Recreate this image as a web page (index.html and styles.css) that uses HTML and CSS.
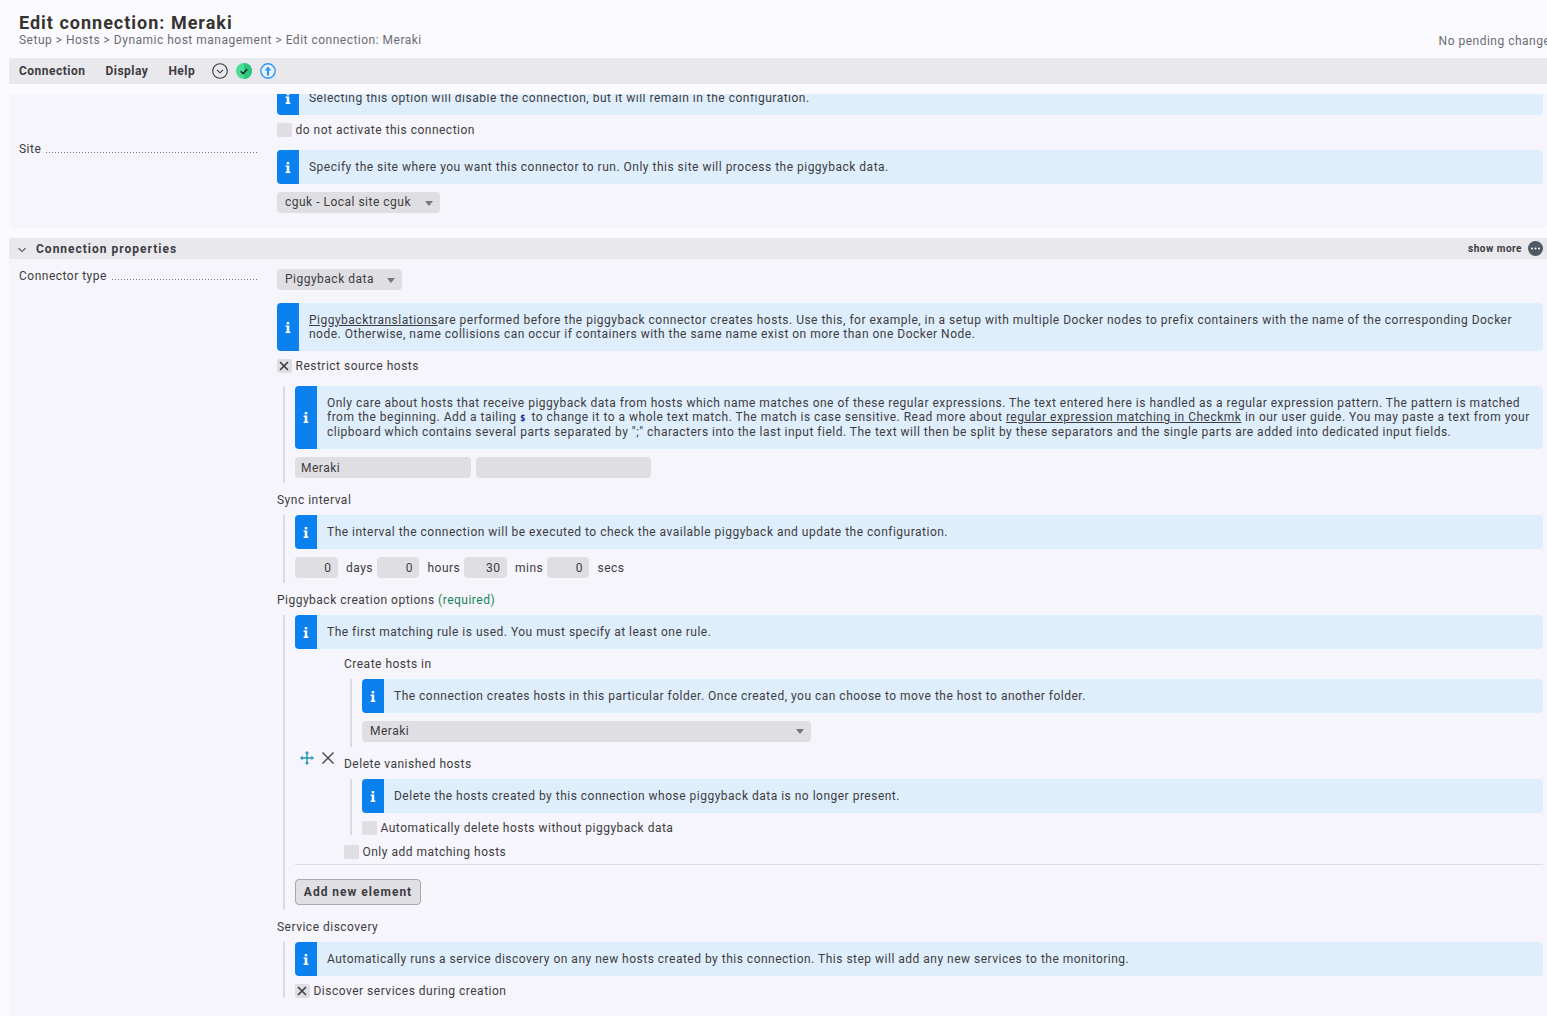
FILE: index.html
```html
<!DOCTYPE html>
<html lang="en">
<head>
    <meta charset="UTF-8">
    <meta name="viewport" content="width=device-width, initial-scale=1.0">
    <link rel="stylesheet" href="styles.css">
    <title>Edit connection: Meraki</title>
</head>
<body>
    <svg class="defs" width="0" height="0">
      <symbol id="info" viewBox="0 0 8 14">
        <rect x="2.400" y="0" width="3.200" height="3" fill="#fff"/>
        <path d="M1 4.600h4.600v7.600H7V14H1v-1.800h1.400V6.400H1z" fill="#fff"/>
      </symbol>
      <symbol id="cross" viewBox="0 0 14 14">
        <path d="M3 3l8 8M11 3l-8 8" stroke="#3a3a40" stroke-width="1.600" fill="none"/>
      </symbol>
    </svg>

    <div class="page-top">
      <div class="titlebar">
        <div>
          <h1>Edit connection: Meraki</h1>
          <div class="breadcrumb">Setup &gt; Hosts &gt; Dynamic host management &gt; Edit connection: Meraki</div>
        </div>
        <div class="pending">No pending changes</div>
      </div>
      <div class="menubar">
        <span class="menu-item">Connection</span>
        <span class="menu-item">Display</span>
        <span class="menu-item">Help</span>
        <svg class="menu-icon first" viewBox="0 0 16 16">
          <circle cx="8" cy="8" r="7.300" fill="none" stroke="#3a3a40" stroke-width="1.100"/>
          <path d="M5 6.800l3 3 3-3" fill="none" stroke="#3a3a40" stroke-width="1.100"/>
        </svg>
        <svg class="menu-icon" viewBox="0 0 16 16">
          <circle cx="8" cy="8" r="8" fill="#4ddc94"/>
          <path d="M8 0a8 8 0 0 1 0 16z" fill="#2fc47e"/>
          <path d="M4.600 8.300l2.400 2.300 4.300-4.400" fill="none" stroke="#22262c" stroke-width="1.500"/>
        </svg>
        <svg class="menu-icon" viewBox="0 0 16 16">
          <circle cx="8" cy="8" r="7.200" fill="#eaf4fe" stroke="#2f96f3" stroke-width="1.400"/>
          <path d="M8 3.400L11.300 7.400H9.100V12.600H6.900V7.400H4.700z" fill="#2f96f3"/>
        </svg>
      </div>
    </div>

    <div class="content">
      <div class="panel first-panel">
        <div class="form-row">
          <div></div>
          <div>
            <div class="info clipped"><div class="info-icon"><svg><use href="#info"/></svg></div><div class="info-text">Selecting this option will disable the connection, but it will remain in the configuration.</div></div>
            <label class="check"><span class="box"></span>do not activate this connection</label>
          </div>
        </div>
        <div class="form-row">
          <div class="form-label"><span>Site</span><span class="dots"></span></div>
          <div class="field-top">
            <div class="info"><div class="info-icon"><svg><use href="#info"/></svg></div><div class="info-text">Specify the site where you want this connector to run. Only this site will process the piggyback data.</div></div>
            <div class="select site">cguk - Local site cguk<span class="caret"></span></div>
          </div>
        </div>
      </div>

      <div class="section-head">
        <svg class="chevron" viewBox="0 0 10 6"><path d="M1.500 1.200L5 4.600l3.500-3.400" fill="none" stroke="#4a4a52" stroke-width="1.100"/></svg>
        <span class="section-title">Connection properties</span>
        <span class="show-more">show more</span>
        <svg class="more-icon" viewBox="0 0 15 15">
          <circle cx="7.500" cy="7.500" r="7.500" fill="#4f5863"/>
          <circle cx="4" cy="7.500" r="1" fill="#fff"/><circle cx="7.500" cy="7.500" r="1" fill="#fff"/><circle cx="11" cy="7.500" r="1" fill="#fff"/>
        </svg>
      </div>

      <div class="panel">
        <div class="form-row">
          <div class="form-label"><span>Connector type</span><span class="dots"></span></div>
          <div>
            <div class="select">Piggyback data<span class="caret"></span></div>

            <div class="info spaced"><div class="info-icon"><svg><use href="#info"/></svg></div><div class="info-text"><u>Piggybacktranslations</u>are performed before the piggyback connector creates hosts. Use this, for example, in a setup with multiple Docker nodes to prefix containers with the name of the corresponding Docker node. Otherwise, name collisions can occur if containers with the same name exist on more than one Docker Node.</div></div>
            <label class="check"><span class="box"><svg class="tick"><use href="#cross"/></svg></span>Restrict source hosts</label>

            <div class="nested">
              <div class="info"><div class="info-icon"><svg><use href="#info"/></svg></div><div class="info-text">Only care about hosts that receive piggyback data from hosts which name matches one of these regular expressions. The text entered here is handled as a regular expression pattern. The pattern is matched from the beginning. Add a tailing <tt>$</tt> to change it to a whole text match. The match is case sensitive. Read more about <u>regular expression matching in Checkmk</u> in our user guide. You may paste a text from your clipboard which contains several parts separated by ";" characters into the last input field. The text will then be split by these separators and the single parts are added into dedicated input fields.</div></div>
              <div class="input-row">
                <span class="input wide">Meraki</span>
                <span class="input wide second"></span>
              </div>
            </div>

            <div class="sub-label">Sync interval</div>
            <div class="nested">
              <div class="info"><div class="info-icon"><svg><use href="#info"/></svg></div><div class="info-text">The interval the connection will be executed to check the available piggyback and update the configuration.</div></div>
              <div class="input-row age">
                <span class="input num">0</span><span class="unit days">days</span>
                <span class="input num">0</span><span class="unit hours">hours</span>
                <span class="input num">30</span><span class="unit mins">mins</span>
                <span class="input num">0</span><span class="unit">secs</span>
              </div>
            </div>

            <div class="sub-label">Piggyback creation options <span class="required">(required)</span></div>
            <div class="nested pad-bottom">
              <div class="info"><div class="info-icon"><svg><use href="#info"/></svg></div><div class="info-text">The first matching rule is used. You must specify at least one rule.</div></div>
              <div class="list-entry">
                <div class="entry-tools">
                  <svg class="move-icon" viewBox="0 0 14 14">
                    <path d="M7 1.500v11M1.500 7h11" stroke="#2393b4" stroke-width="1.400"/>
                    <path d="M7 0l2.200 2.600H4.800zM7 14l2.200-2.600H4.800zM0 7l2.600-2.200v4.400zM14 7l-2.600-2.200v4.400z" fill="#2393b4"/>
                  </svg>
                  <svg class="delete-icon" viewBox="0 0 14 14"><path d="M1.500 1.500l11 11M12.500 1.500l-11 11" stroke="#4a4f57" stroke-width="1.500"/></svg>
                </div>
                <div class="entry-body">
                  <div class="entry-label">Create hosts in</div>
                  <div class="nested inner pad-bottom">
                    <div class="info"><div class="info-icon"><svg><use href="#info"/></svg></div><div class="info-text">The connection creates hosts in this particular folder. Once created, you can choose to move the host to another folder.</div></div>
                    <div class="select folder">Meraki<span class="caret"></span></div>
                  </div>
                  <div class="entry-label next">Delete vanished hosts</div>
                  <div class="nested inner">
                    <div class="info"><div class="info-icon"><svg><use href="#info"/></svg></div><div class="info-text">Delete the hosts created by this connection whose piggyback data is no longer present.</div></div>
                    <label class="check"><span class="box"></span>Automatically delete hosts without piggyback data</label>
                  </div>
                  <label class="check only-add"><span class="box"></span>Only add matching hosts</label>
                </div>
              </div>
              <hr class="divider">
              <button class="add-btn">Add new element</button>
            </div>

            <div class="sub-label">Service discovery</div>
            <div class="nested">
              <div class="info"><div class="info-icon"><svg><use href="#info"/></svg></div><div class="info-text">Automatically runs a service discovery on any new hosts created by this connection. This step will add any new services to the monitoring.</div></div>
              <label class="check"><span class="box"><svg class="tick"><use href="#cross"/></svg></span>Discover services during creation</label>
            </div>
          </div>
        </div>
      </div>
    </div>
</body>
</html>
```
FILE: styles.css
```css
html, body {
  margin: 0;
  height: 100%;
  overflow: hidden;
}

body {
  background-color: #fbfbff;
  color: #3e3c40;
  font-family: Roboto, "Liberation Sans", sans-serif;
  font-size: 12px;
  line-height: 14.4px;
  letter-spacing: 0.495px;
}

.defs {
  position: absolute;
}

/* top of the page */
.page-top {
  height: 94px;
  padding-left: 9px;
  box-sizing: border-box;
}

.titlebar {
  display: flex;
  justify-content: space-between;
  align-items: flex-end;
  height: 58px;
  padding: 0 0 11px 10px;
  box-sizing: border-box;
}

.titlebar h1 {
  margin: 0;
  font-size: 18px;
  line-height: 22px;
  font-weight: 700;
  letter-spacing: 1px;
  color: #35332f;
}

.breadcrumb {
  color: #6b6b72;
  margin-top: -1px;
}

.pending {
  color: #6b6b72;
  white-space: nowrap;
  margin-right: -10px;
  margin-bottom: -1px;
}

.menubar {
  display: flex;
  align-items: center;
  height: 26px;
  padding-left: 10px;
  background-color: #e8e8ed;
}

.menu-item {
  font-weight: 700;
  margin-right: 20px;
}

.menu-icon {
  width: 16px;
  height: 16px;
  margin-right: 8px;
}

.menu-icon.first {
  margin-left: -3px;
}

/* scrolling part */
.content {
  height: 922px;
  overflow: hidden;
  padding-left: 9px;
}

.panel {
  background-color: #f5f5fb;
  padding: 0 4px 0 10px;
}

.first-panel {
  height: 134px;
  margin-bottom: 10px;
  border-radius: 0 0 4px 4px;
}

.form-row {
  display: grid;
  grid-template-columns: 239px 1fr;
  column-gap: 19px;
}

.form-label {
  display: flex;
  align-items: baseline;
}

.dots {
  flex: 1;
  margin-left: 5px;
  height: 1px;
  background-image: repeating-linear-gradient(90deg, #77777d 0 1px, transparent 1px 3px);
}

.field-top {
  padding-top: 8px;
}

.first-panel .form-row:last-child {
  margin-top: 5px;
}

.info {
  display: flex;
  background-color: #deeefc;
  border-radius: 4px;
  overflow: hidden;
  margin-bottom: 8px;
}

.info.clipped {
  margin-top: -13px;
}

.info.spaced {
  margin-top: 13px;
}

.info-icon {
  flex: none;
  width: 22px;
  display: flex;
  align-items: center;
  justify-content: center;
  background-color: #0b80ef;
}

.info-icon svg {
  width: 8px;
  height: 11px;
}

.info-text {
  padding: 9.600px 10px 10px;
}

tt {
  font-family: "DejaVu Sans Mono", monospace;
  font-size: 9px;
  line-height: 0;
  font-weight: 700;
  letter-spacing: 2.500px;
  color: #1a1a9a;
}

.check {
  display: flex;
  align-items: center;
  height: 14px;
}

.box {
  width: 15px;
  height: 14px;
  margin-right: 3.500px;
  background-color: #dfdfe3;
  border-radius: 2px;
  display: flex;
}

.tick {
  width: 14px;
  height: 14px;
}

.select {
  display: inline-flex;
  align-items: center;
  height: 21px;
  padding: 0 7px 0 8px;
  background-color: #dfdfe3;
  border-radius: 4px;
  vertical-align: top;
}

.caret {
  margin: 2px 0 0 13.500px;
  width: 0;
  height: 0;
  border-left: 4px solid transparent;
  border-right: 4px solid transparent;
  border-top: 5px solid #77777d;
}

.select.site {
  justify-content: space-between;
  width: 163px;
  box-sizing: border-box;
}

.select.folder {
  display: flex;
  justify-content: space-between;
  width: 449px;
  padding-bottom: 2px;
  box-sizing: border-box;
}

.section-head {
  display: flex;
  align-items: center;
  height: 21px;
  padding: 0 4px 0 8px;
  background-color: #e8e8ed;
}

.chevron {
  width: 10px;
  height: 6px;
  margin-top: 2px;
}

.section-title {
  flex: 1;
  margin: 1px 0 0 9px;
  font-weight: 700;
  letter-spacing: 1px;
}

.show-more {
  font-size: 10px;
  font-weight: 700;
  margin: 1px 6px 0 0;
}

.more-icon {
  width: 15px;
  height: 15px;
}

.panel:last-child {
  padding-top: 10px;
  padding-bottom: 30px;
}

.nested {
  border-left: 2px solid #dcdce0;
  margin-left: 6px;
  padding-left: 10px;
  margin-top: 8px;
}

.check + .nested {
  margin-top: 13px;
}

.pad-bottom {
  padding-bottom: 5px;
}

.input-row {
  display: flex;
  padding-bottom: 5px;
}

.input {
  height: 21px;
  line-height: 22px;
  background-color: #dfdfe3;
  border-radius: 4px;
  box-sizing: border-box;
}

.input.wide {
  width: 176px;
  padding-left: 6px;
}

.input.wide.second {
  margin-left: 5px;
  width: 175px;
}

.input.num {
  width: 42.500px;
  padding-right: 6px;
  text-align: right;
}

.unit {
  height: 21px;
  line-height: 22px;
  padding-left: 8.500px;
}

.unit.days {
  width: 30.500px;
}

.unit.hours {
  width: 36.500px;
}

.unit.mins {
  width: 31.500px;
}

.sub-label {
  margin-top: 10px;
  line-height: 14px;
}

.required {
  color: #15855c;
}

.list-entry {
  display: flex;
  align-items: center;
}

.entry-tools {
  flex: none;
  width: 49px;
  display: flex;
  align-items: center;
  padding-left: 5px;
  box-sizing: border-box;
}

.move-icon {
  width: 14px;
  height: 14px;
}

.delete-icon {
  width: 14px;
  height: 14px;
  margin-left: 7px;
}

.entry-body {
  flex: 1;
}

.entry-label {
  line-height: 14px;
}

.entry-label.next {
  margin-top: 10px;
}

.inner {
  margin-top: 8px;
}

.only-add {
  margin-top: 10px;
}

.divider {
  border: none;
  border-top: 1px solid #dcdce0;
  margin: 5px 0 14px;
}

.add-btn {
  display: block;
  width: 126px;
  height: 26px;
  padding: 0;
  background-color: #e0e0e4;
  border: 1px solid #a8a8ac;
  border-radius: 4px;
  color: #3e3c40;
  font: inherit;
  font-weight: 700;
  letter-spacing: 1px;
}
```
